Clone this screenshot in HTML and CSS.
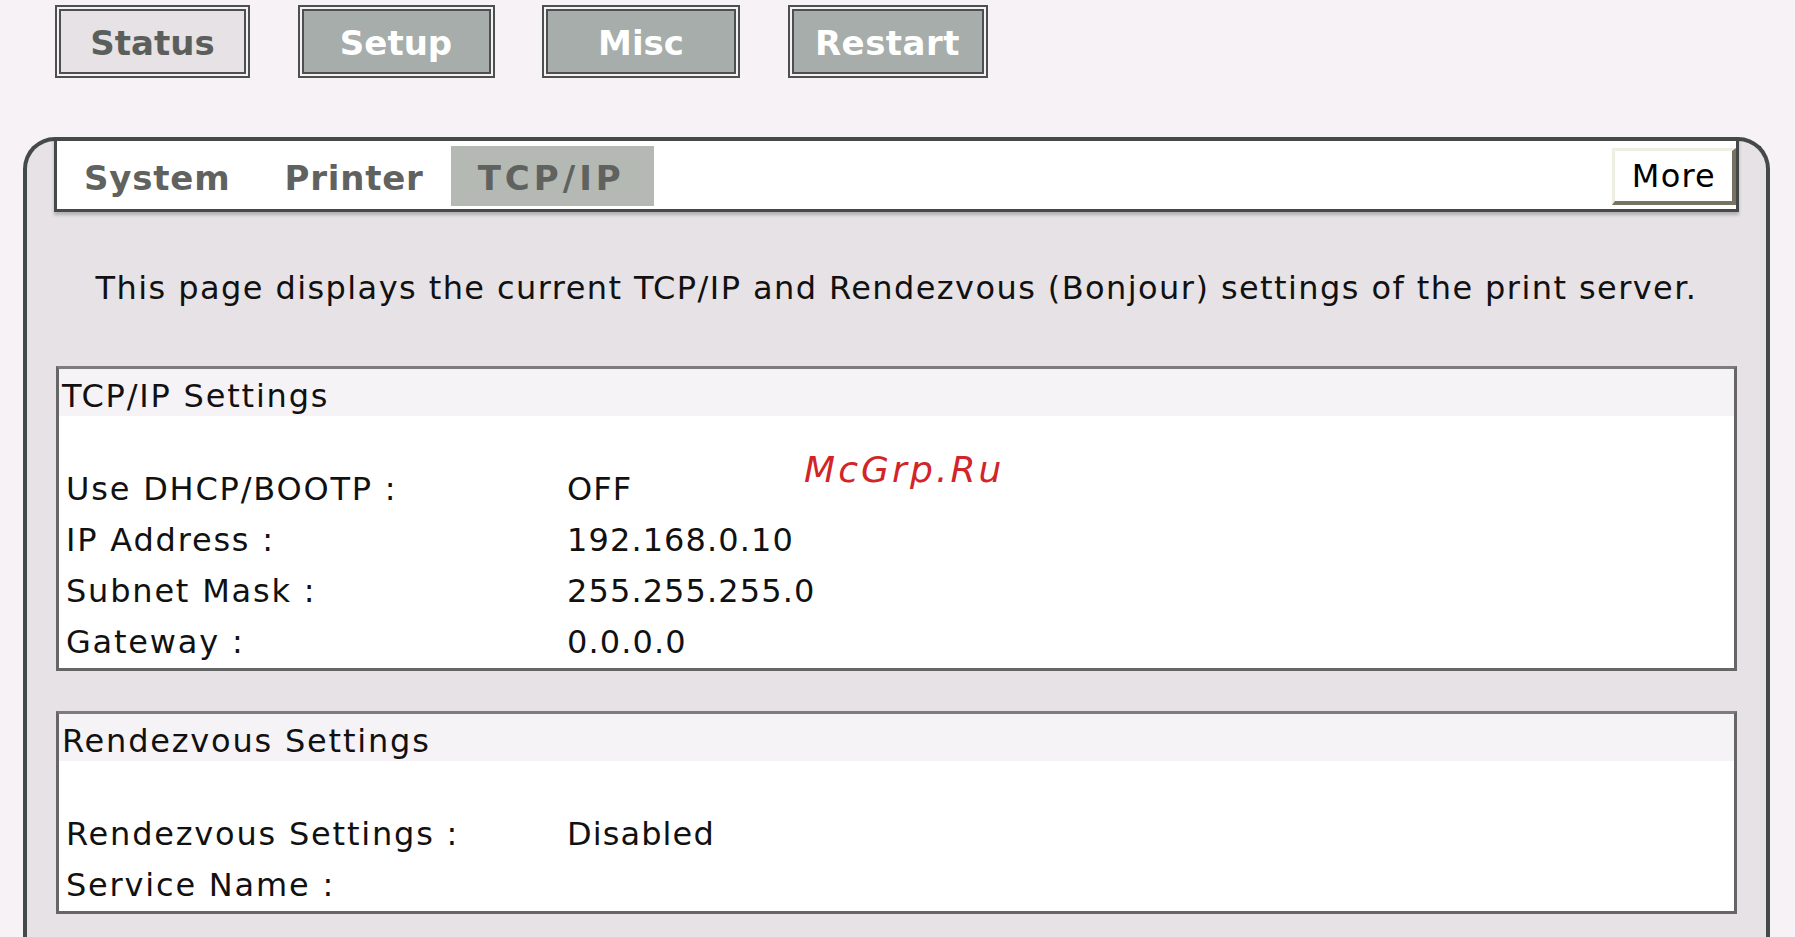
FILE: index.html
```html
<!DOCTYPE html>
<html>
<head>
<meta charset="utf-8">
<title>TCP/IP</title>
<link rel="stylesheet" href="styles.css">
</head>
<body>
<nav class="topnav">
  <a class="navbtn navbtn-current">Status</a>
  <a class="navbtn">Setup</a>
  <a class="navbtn navbtn-misc">Misc</a>
  <a class="navbtn navbtn-wide">Restart</a>
</nav>
<div class="panel">
  <div class="tabbar">
    <span class="tab">System</span>
    <span class="tab">Printer</span>
    <span class="tab tab-active">TCP/IP</span>
    <span class="more">More</span>
  </div>
  <p class="desc">This page displays the current TCP/IP and Rendezvous (Bonjour) settings of the print server.</p>
  <section class="box">
    <div class="box-title">TCP/IP Settings</div>
    <div class="spacer"></div>
    <div class="row"><span class="label">Use DHCP/BOOTP :</span><span class="value">OFF</span></div>
    <div class="row"><span class="label">IP Address :</span><span class="value">192.168.0.10</span></div>
    <div class="row"><span class="label">Subnet Mask :</span><span class="value">255.255.255.0</span></div>
    <div class="row"><span class="label">Gateway :</span><span class="value">0.0.0.0</span></div>
  </section>
  <section class="box">
    <div class="box-title">Rendezvous Settings</div>
    <div class="spacer"></div>
    <div class="row"><span class="label">Rendezvous Settings :</span><span class="value">Disabled</span></div>
    <div class="row"><span class="label">Service Name :</span><span class="value"></span></div>
  </section>
</div>
<div class="watermark">McGrp.Ru</div>
</body>
</html>
```
FILE: styles.css
```css
html, body {
  margin: 0;
  padding: 0;
  background: #f6f2f6;
  font-family: "DejaVu Sans", Verdana, sans-serif;
  color: #111;
  overflow: hidden;
  height: 937px;
}

.topnav {
  display: flex;
  gap: 47.5px;
  padding: 5px 0 0 55px;
}

.navbtn {
  box-sizing: border-box;
  width: 197px;
  height: 73px;
  padding-top: 3px;
  display: flex;
  align-items: center;
  justify-content: center;
  background: #a6adaa;
  color: #ffffff;
  font-weight: bold;
  font-size: 34px;
  border: 2px solid #4e504f;
  box-shadow: inset 0 0 0 2px #f4f2f4, inset 0 0 0 4px #4e504f;
  cursor: pointer;
}

.navbtn-current {
  background: #e6e2e6;
  color: #5b5f5c;
  width: 195px;
}

.navbtn-misc {
  width: 198px;
}

.navbtn-wide {
  width: 200px;
  letter-spacing: 0.5px;
}

.panel {
  position: relative;
  margin: 59px 25px 0 23px;
  border: 4px solid #454947;
  border-bottom: none;
  border-radius: 32px 32px 0 0;
  background: #e6e2e6;
  padding-bottom: 80px;
}

.tabbar {
  display: flex;
  align-items: flex-start;
  box-sizing: border-box;
  height: 75px;
  margin: -4px 27px 0 27px;
  background: #ffffff;
  border: 3px solid #454947;
  border-top-width: 4px;
  box-shadow: 0 3px 3px rgba(0, 0, 0, 0.22);
}

.tab {
  box-sizing: border-box;
  height: 60px;
  padding: 4px 27px 0;
  line-height: 56px;
  margin-top: 5px;
  font-weight: bold;
  font-size: 34px;
  letter-spacing: 0.8px;
  color: #5f625f;
}

.tab-active {
  background: #b4b9b4;
  letter-spacing: 4px;
  padding-right: 29px;
}

.more {
  margin-left: auto;
  margin-top: 7px;
  box-sizing: border-box;
  height: 57px;
  line-height: 50px;
  padding: 0 16px 0 17px;
  background: #ffffff;
  border-style: solid;
  border-width: 3px 4px 4px 3px;
  border-color: #efeee2 #787360 #787360 #efeee2;
  font-size: 32px;
  letter-spacing: 1.2px;
  color: #000;
}

.desc {
  margin: 51px 0 52px;
  line-height: 51px;
  font-size: 32px;
  letter-spacing: 1.42px;
  text-align: center;
}

.box {
  margin: 0 29px 40px;
  background: #ffffff;
  border: 3px solid #666666;
  border-top-color: #7c7c7c;
}

.box-title {
  height: 47px;
  box-sizing: border-box;
  padding: 6px 0 0 3px;
  line-height: 42px;
  background: #f6f3f6;
  font-size: 32px;
  letter-spacing: 1.8px;
}

.spacer {
  height: 48px;
}

.row {
  display: grid;
  grid-template-columns: 508px 1fr;
  height: 51px;
  line-height: 51px;
  font-size: 32px;
  letter-spacing: 1.8px;
}

.label {
  padding-left: 7px;
}

.value {
  letter-spacing: 1.1px;
}

.watermark {
  position: absolute;
  left: 804px;
  top: 452px;
  font-size: 36px;
  line-height: 36px;
  font-style: italic;
  letter-spacing: 3.1px;
  color: #d1252a;
}
```
